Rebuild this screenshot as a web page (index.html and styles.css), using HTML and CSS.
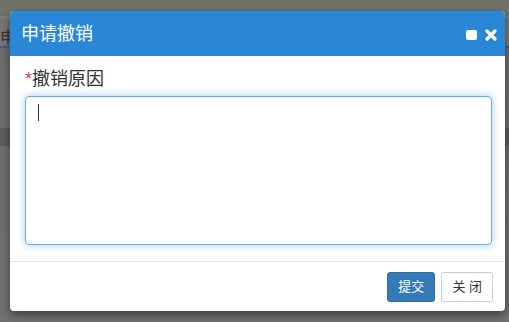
FILE: index.html
```html
<!DOCTYPE html>
<html lang="zh-CN">
<head>
    <meta charset="UTF-8">
    <meta name="viewport" content="width=device-width, initial-scale=1.0">
    <title>申请撤销</title>
    <link rel="stylesheet" href="styles.css">
</head>
<body>
    <div class="page">
        <div class="page-top"></div>
        <div class="page-tabs"><span class="page-tab">申请</span></div>
        <div class="page-main">
            <div class="page-band"></div>
        </div>
    </div>

    <div class="modal">
        <div class="modal-header">
            <h3 class="modal-title">申请撤销</h3>
            <div class="modal-tools">
                <span class="tool-max"></span>
                <svg class="tool-close" width="12" height="12" viewBox="0 0 12 12">
                    <path d="M2 2 L10 10 M10 2 L2 10" stroke="#fff" stroke-width="3.2" stroke-linecap="round"/>
                </svg>
            </div>
        </div>
        <div class="modal-body">
            <label class="field-label"><span class="required">*</span>撤销原因</label>
            <div class="textarea"><span class="caret"></span></div>
        </div>
        <div class="modal-footer">
            <button class="btn btn-primary">提交</button>
            <button class="btn btn-default">关 闭</button>
        </div>
    </div>
</body>
</html>
```

FILE: styles.css
```css
* {
    margin: 0;
    padding: 0;
    box-sizing: border-box;
    font-family: "Liberation Sans", "Noto Sans CJK SC", sans-serif;
}

body {
    background-color: #6c6c6c;
    height: 322px;
    overflow: hidden;
}

.page {
    display: flex;
    flex-direction: column;
    height: 100%;
}

.page-top {
    height: 18px;
    background-color: #6e7269;
    border-bottom: 2px solid #7d7d7d;
}

.page-tabs {
    height: 30px;
    background-color: #767676;
    border-bottom: 2px solid #3d5f80;
    padding-top: 6px;
}

.page-tab {
    display: block;
    font-size: 16px;
    color: #333;
}

.page-main {
    flex: 1;
    padding-top: 80px;
    background: linear-gradient(#6d6d6d, #717171);
}

.page-band {
    height: 18px;
    background-color: #5c5c5c;
}

.modal {
    position: absolute;
    left: 10px;
    top: 11px;
    width: 495px;
    height: 300px;
    background: white;
    border-radius: 4px;
    box-shadow: 0 4px 10px rgba(0, 0, 0, 0.45);
    overflow: hidden;
    display: flex;
    flex-direction: column;
}

.modal-header {
    height: 45px;
    flex-shrink: 0;
    background-color: #2a87d8;
    display: flex;
    align-items: center;
    justify-content: space-between;
    padding: 0 8px 0 11px;
}

.modal-title {
    color: white;
    font-size: 18px;
    font-weight: normal;
    line-height: 24px;
    margin-top: 1px;
}

.modal-tools {
    display: flex;
    align-items: center;
    gap: 8px;
    margin-top: 2px;
}

.tool-max {
    width: 11px;
    height: 10px;
    background: white;
    border-radius: 2px;
}

.tool-close {
    display: block;
}

.modal-body {
    padding: 11px 13px 16px 15px;
}

.field-label {
    display: block;
    font-size: 18px;
    line-height: 24px;
    color: #333;
    margin-bottom: 5px;
}

.required {
    color: #e4393c;
}

.textarea {
    height: 149px;
    border: 1px solid #66afe9;
    border-radius: 4px;
    box-shadow: inset 0 1px 1px rgba(0, 0, 0, 0.075), 0 0 8px rgba(102, 175, 233, 0.6);
    padding: 7px 12px;
}

.caret {
    display: block;
    width: 1px;
    height: 17px;
    background: #333;
}

.modal-footer {
    border-top: 1px solid #e5e5e5;
    padding: 10px 12px 9px;
    display: flex;
    justify-content: flex-end;
    gap: 6px;
}

.btn {
    font-size: 13px;
    line-height: 18px;
    padding: 5px 10px;
    border-radius: 3px;
    border: 1px solid #ccc;
    cursor: pointer;
}

.btn-primary {
    background-color: #337ab7;
    border-color: #2e6da4;
    color: white;
}

.btn-default {
    background-color: white;
    color: #333;
}
```
